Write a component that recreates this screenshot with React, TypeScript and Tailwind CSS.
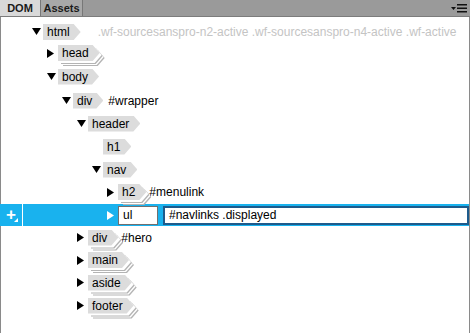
import React from 'react';

type Node = {
  tag: string;
  level: number;
  toggle?: 'open' | 'closed';
  stacked?: boolean;
  extra?: string;
  faint?: boolean;
  h?: string;
};

const nodes: Node[] = [
  { tag: 'html', level: 0, toggle: 'open', extra: '.wf-sourcesanspro-n2-active .wf-sourcesanspro-n4-active .wf-active', faint: true, h: 'h-[20px]' },
  { tag: 'head', level: 1, toggle: 'closed', stacked: true, h: 'h-[22px]' },
  { tag: 'body', level: 1, toggle: 'open', h: 'h-[25px]' },
  { tag: 'div', level: 2, toggle: 'open', extra: '#wrapper' },
  { tag: 'header', level: 3, toggle: 'open' },
  { tag: 'h1', level: 4 },
  { tag: 'nav', level: 4, toggle: 'open' },
  { tag: 'h2', level: 5, toggle: 'closed', stacked: true, extra: '#menulink', h: 'h-[22px]' },
];

const after: Node[] = [
  { tag: 'div', level: 3, toggle: 'closed', stacked: true, extra: '#hero' },
  { tag: 'main', level: 3, toggle: 'closed', stacked: true, h: 'h-[22px]' },
  { tag: 'aside', level: 3, toggle: 'closed', stacked: true },
  { tag: 'footer', level: 3, toggle: 'closed', stacked: true },
];

// indentation per level, 15px steps
const indent = ['pl-[31px]', 'pl-[46px]', 'pl-[61px]', 'pl-[76px]', 'pl-[91px]', 'pl-[106px]'];

const shape = '[clip-path:polygon(0_0,calc(100%-7px)_0,100%_50%,calc(100%-7px)_100%,0_100%)]';

function Toggle({ kind, white }: { kind?: 'open' | 'closed'; white?: boolean }) {
  const fill = white ? '#ffffff' : '#000000';
  return (
    <div className="w-[11px] h-[10px] flex items-center shrink-0">
      {kind === 'open' && (
        <svg width="9" height="8" viewBox="0 0 9 8">
          <polygon points="0,0 9,0 4.5,7" fill={fill} />
        </svg>
      )}
      {kind === 'closed' && (
        <svg width="7" height="9" viewBox="0 0 7 9">
          <polygon points="0,0 7,4.5 0,9" fill={fill} />
        </svg>
      )}
    </div>
  );
}

function Tag({ name, stacked }: { name: string; stacked?: boolean }) {
  return (
    <div className="relative h-[16px]">
      {stacked && (
        <>
          <div className={`absolute inset-0 translate-x-[5px] translate-y-[5px] bg-[#b4b4b4] ${shape}`} />
          <div className={`absolute inset-0 translate-x-[4px] translate-y-[4px] bg-white ${shape}`} />
          <div className={`absolute inset-0 translate-x-[3px] translate-y-[3px] bg-[#b4b4b4] ${shape}`} />
          <div className={`absolute inset-0 translate-x-[2px] translate-y-[2px] bg-white ${shape}`} />
        </>
      )}
      <div className={`relative h-[16px] bg-[#dcdcdc] pl-[4px] pr-[11px] flex items-center text-[12px] text-black ${shape}`}>
        {name}
      </div>
    </div>
  );
}

function Row({ n }: { n: Node }) {
  const gap = n.faint ? 'ml-[17px] text-[#c4c4c4]' : n.stacked ? 'ml-[3px] text-black' : 'ml-[5px] text-black';
  return (
    <div className={`flex items-center ${n.h ?? 'h-[23px]'} ${indent[n.level]}`}>
      <Toggle kind={n.toggle} />
      <Tag name={n.tag} stacked={n.stacked} />
      {n.extra && <span className={`text-[12px] whitespace-nowrap ${gap}`}>{n.extra}</span>}
    </div>
  );
}

export default function App() {
  return (
    <div
      className="w-[470px] h-[333px] bg-white overflow-hidden flex flex-col"
      style={{ fontFamily: '"Liberation Sans", Arial, sans-serif' }}
    >
      {/* panel tabs */}
      <div className="h-[17px] shrink-0 bg-[#9a9a9a] border-b border-[#7c7c7c] flex items-stretch">
        <div className="w-[41px] bg-[#d9d9d9] border-r border-[#777] flex items-center justify-center text-[11px] font-bold text-[#1a1a1a]">
          DOM
        </div>
        <div className="w-[42px] bg-[#a8a8a8] border-r border-[#777] flex items-center justify-center text-[11px] font-bold text-[#1a1a1a]">
          Assets
        </div>
        <div className="flex-1" />
        <div className="flex items-center pr-[3px] gap-[1px]">
          <svg width="5" height="3" viewBox="0 0 5 3">
            <polygon points="0,0 5,0 2.5,3" fill="#111" />
          </svg>
          <svg width="10" height="9" viewBox="0 0 10 9">
            <rect x="0" y="0" width="10" height="1.5" fill="#111" />
            <rect x="0" y="3.5" width="10" height="1.5" fill="#111" />
            <rect x="0" y="7" width="10" height="1.5" fill="#111" />
          </svg>
        </div>
      </div>

      {/* tree */}
      <div className="flex-1 border-l border-r border-[#8a8a8a] pt-[5px]">
        {nodes.map((n, i) => (
          <Row key={i} n={n} />
        ))}

        {/* selected row being edited */}
        <div className="h-[22px] mt-px flex items-center bg-[#19b2ee] -ml-px">
          <div className="w-[23px] h-full border-r border-white flex items-center justify-center relative">
            <span className="text-white text-[17px] font-bold leading-none -mt-[2px]">+</span>
            <svg className="absolute right-[4px] bottom-[4px]" width="4" height="4" viewBox="0 0 4 4">
              <polygon points="4,0 4,4 0,4" fill="#fff" />
            </svg>
          </div>
          <div className="pl-[84px] flex items-center">
            <Toggle kind="closed" white />
          </div>
          <div className="w-[40px] h-[19px] bg-white border border-[#707070] flex items-center pl-[4px] text-[12px] text-black">
            ul
          </div>
          <div className="ml-[5px] flex-1 h-[19px] bg-white border-2 border-[#1d5b8c] flex items-center pl-[4px] text-[12px] text-black">
            #navlinks .displayed
          </div>
        </div>

        {after.map((n, i) => (
          <Row key={i} n={n} />
        ))}
      </div>
    </div>
  );
}
